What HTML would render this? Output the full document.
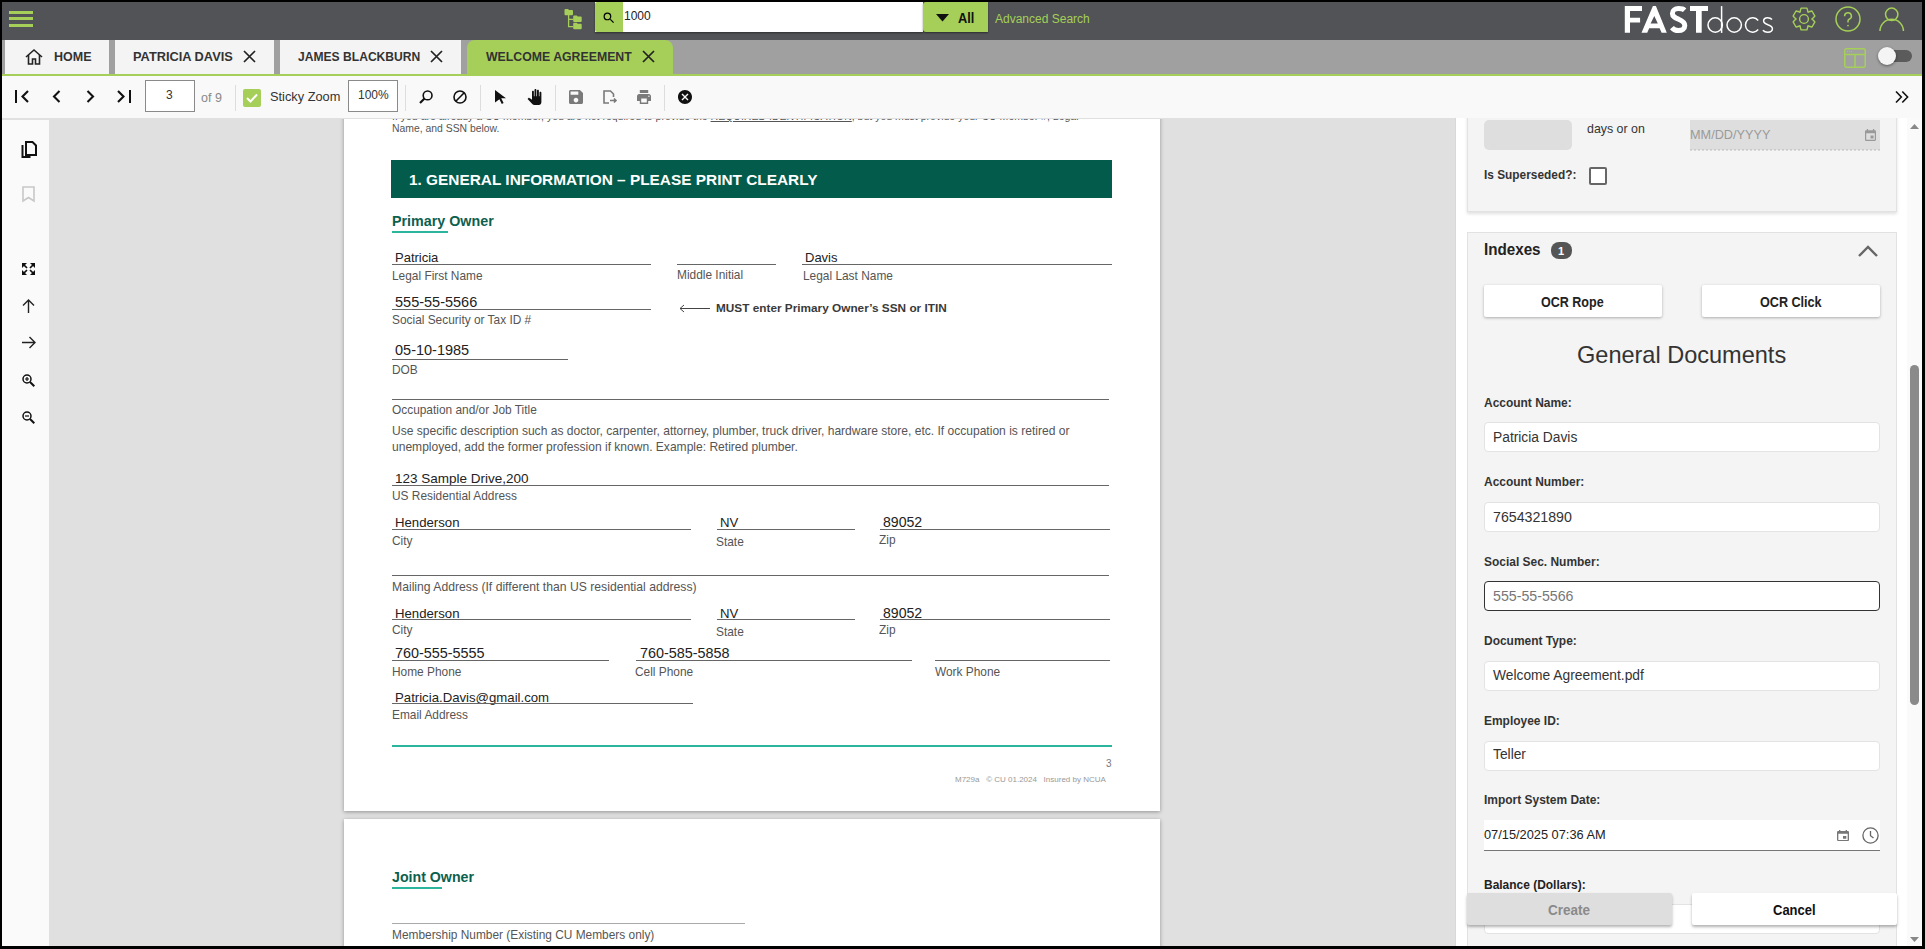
<!DOCTYPE html>
<html><head><meta charset="utf-8"><title>FASTdocs</title><style>
*{box-sizing:border-box}
html,body{margin:0;padding:0}
body{width:1925px;height:949px;overflow:hidden;background:#000;position:relative;font-family:"Liberation Sans",sans-serif}
.b{position:absolute}
.t{position:absolute;white-space:nowrap}
svg{position:absolute;overflow:visible}
</style></head>
<body>
<div class="b" style="left:2px;top:2px;width:1920px;height:38px;background:#525356"></div>
<div class="b" style="left:9px;top:11px;width:24px;height:3px;background:#a5cf58"></div>
<div class="b" style="left:9px;top:17px;width:24px;height:3px;background:#a5cf58"></div>
<div class="b" style="left:9px;top:24px;width:24px;height:3px;background:#a5cf58"></div>
<svg style="left:564px;top:9px" width="18" height="21" viewBox="0 0 18 21">
<g fill="#a5cf58">
<path d="M0.5 1a1 1 0 0 1 1-1h2.5l1 1h3a1 1 0 0 1 1 1v3.3a1 1 0 0 1-1 1H1.5a1 1 0 0 1-1-1z"/>
<path d="M9.2 7.5a1 1 0 0 1 1-1h2.5l1 1h3a1 1 0 0 1 1 1v3.5a1 1 0 0 1-1 1h-6.5a1 1 0 0 1-1-1z"/>
<path d="M9.2 14.7a1 1 0 0 1 1-1h2.5l1 1h3a1 1 0 0 1 1 1v3.5a1 1 0 0 1-1 1h-6.5a1 1 0 0 1-1-1z"/>
</g>
<path d="M4.6 6V17.6H9.5M4.6 10.3H9.5" stroke="#a5cf58" stroke-width="1.3" fill="none"/>
</svg>
<div class="b" style="left:595px;top:2px;width:328px;height:30px;background:#fff;box-shadow:0 1px 2px rgba(0,0,0,.45)"></div>
<div class="b" style="left:595px;top:2px;width:28px;height:30px;background:#a5cf58;border-radius:2px 0 0 2px"></div>
<svg style="left:603px;top:12px" width="12" height="12" viewBox="0 0 24 24"><path d="M15.5 14h-.79l-.28-.27A6.47 6.47 0 0 0 16 9.5 6.5 6.5 0 1 0 9.5 16c1.61 0 3.09-.59 4.23-1.57l.27.28v.79l5 4.99L20.49 19l-4.99-5zm-6 0C7.01 14 5 11.99 5 9.5S7.01 5 9.5 5 14 7.01 14 9.5 11.99 14 9.5 14z" transform="translate(-2.5 -2.5) scale(1.2)"/></svg>
<div class="t" style="left:624px;top:10px;font-size:12px;line-height:12px;font-weight:normal;color:#222;">1000</div>
<div class="b" style="left:923px;top:2px;width:65px;height:30px;background:#a5cf58;border-radius:3px 0 0 3px;box-shadow:0 1px 2px rgba(0,0,0,.45)"></div>
<svg style="left:936px;top:14px" width="13" height="8" viewBox="0 0 13 8"><path d="M0 0h13L6.5 7.5z" fill="#111"/></svg>
<div class="t" style="left:958px;top:11px;font-size:14.2px;line-height:14.2px;font-weight:bold;color:#111;transform:scaleX(.9);transform-origin:0 0">All</div>
<div class="t" style="left:995px;top:13px;font-size:12px;line-height:12px;font-weight:normal;color:#a5cf58;">Advanced Search</div>
<svg style="left:1600px;top:0px" width="180" height="40" viewBox="1600 0 180 40">
<g fill="#fff">
<path d="M1624.8 6.1H1642V11.1H1630V17.8H1640.1V22.6H1630V32.8H1624.8Z"/>
<path fill-rule="evenodd" d="M1641.5 32.8L1652.9 6.1H1655.9L1666.8 32.8H1661.6L1659.6 28.3H1649.2L1647.2 32.8ZM1650.6 23.5H1657.8L1654.3 15.9Z"/>
<path d="M1690 6.1H1708V11.1H1701.7V32.8H1696V11.1H1690Z"/>
</g>
<g fill="none" stroke="#fff">
<path stroke-width="5" d="M1684.6 10.2C1683 8.7 1681 8.6 1678.4 8.6C1675 8.6 1672.4 10.5 1672.4 13.4C1672.4 16.6 1675.3 17.8 1678.6 19.2C1682 20.6 1684.8 22 1684.8 25.6C1684.8 28.6 1682.2 30.6 1678.4 30.6C1675.6 30.6 1673.4 29.4 1671.9 27.6"/>
<g stroke-width="1.5">
<circle cx="1715.2" cy="25" r="7.2"/><path d="M1721.6 6.1V32.9"/>
<circle cx="1734.2" cy="25" r="7.2"/>
<path d="M1758.2 20.4A7.2 7.2 0 1 0 1758.2 29.6"/>
<path d="M1772 19.6C1771 18.4 1769.4 17.8 1767.6 17.8C1765.3 17.8 1763.6 19.2 1763.6 21.1C1763.6 23.3 1765.6 24 1767.9 24.8C1770.4 25.6 1772.4 26.6 1772.4 28.8C1772.4 30.8 1770.4 32.2 1767.7 32.2C1765.6 32.2 1763.9 31.4 1762.9 30.2"/>
</g></g></svg>
<svg style="left:1792px;top:7px" width="24" height="24" viewBox="0 0 24 24" fill="none" stroke="#a5cf58" stroke-width="1.4" stroke-linejoin="round">
<path d="M8.24 3.93L9.08 1.09L14.92 1.09L15.76 3.93Q15.45 6.02 17.10 4.71L17.10 4.71L19.99 4.01L22.91 9.08L20.87 11.22Q18.90 12.00 20.87 12.78L20.87 12.78L22.91 14.92L19.99 19.99L17.10 19.29Q15.45 17.98 15.76 20.07L15.76 20.07L14.92 22.91L9.08 22.91L8.24 20.07Q8.55 17.98 6.90 19.29L6.90 19.29L4.01 19.99L1.09 14.92L3.13 12.78Q5.10 12.00 3.13 11.22L3.13 11.22L1.09 9.08L4.01 4.01L6.90 4.71Q8.55 6.02 8.24 3.93Z"/>
<circle cx="12" cy="12" r="4.4"/></svg>
<svg style="left:1835px;top:6px" width="26" height="26" viewBox="0 0 26 26" fill="none" stroke="#a5cf58" stroke-width="1.5">
<circle cx="13" cy="13" r="12"/>
<path d="M9.6 10.2a3.4 3.4 0 1 1 4.6 3.1c-.9.4-1.2 1-1.2 2v1.3" />
<circle cx="13" cy="19.6" r="0.9" fill="#a5cf58" stroke="none"/></svg>
<svg style="left:1879px;top:7px" width="26" height="25" viewBox="0 0 26 25" fill="none" stroke="#a5cf58" stroke-width="1.5">
<circle cx="12.7" cy="7.3" r="6.2"/>
<path d="M1 24A11.7 11.7 0 0 1 24.4 24"/></svg>
<div class="b" style="left:2px;top:40px;width:1920px;height:34px;background:#a0a0a0"></div>
<div class="b" style="left:5px;top:40px;width:104px;height:34px;background:#f4f4f4"></div>
<div class="b" style="left:115px;top:40px;width:159px;height:34px;background:#f4f4f4"></div>
<div class="b" style="left:280px;top:40px;width:181px;height:34px;background:#f4f4f4"></div>
<div class="b" style="left:467px;top:40px;width:206px;height:34px;background:#a5cf58;border-radius:8px 8px 0 0"></div>
<svg style="left:25px;top:49px" width="18" height="16" viewBox="0 0 18 16" fill="none" stroke="#222" stroke-width="1.6">
<path d="M1 8L9 1l8 7"/><path d="M3.5 6v9h4v-5h3v5h4V6"/></svg>
<div class="t" style="left:54px;top:51px;font-size:12.5px;line-height:12.5px;font-weight:bold;color:#333;">HOME</div>
<div class="t" style="left:133px;top:51px;font-size:12.8px;line-height:12.8px;font-weight:bold;color:#333;">PATRICIA DAVIS</div>
<svg style="left:243px;top:50px" width="13" height="13" viewBox="0 0 13 13"><path d="M1 1L12 12M12 1L1 12" stroke="#222" stroke-width="1.7"/></svg>
<div class="t" style="left:298px;top:51px;font-size:12.1px;line-height:12.1px;font-weight:bold;color:#333;">JAMES BLACKBURN</div>
<svg style="left:430px;top:50px" width="13" height="13" viewBox="0 0 13 13"><path d="M1 1L12 12M12 1L1 12" stroke="#222" stroke-width="1.7"/></svg>
<div class="t" style="left:486px;top:51px;font-size:12.3px;line-height:12.3px;font-weight:bold;color:#333;">WELCOME AGREEMENT</div>
<svg style="left:642px;top:50px" width="13" height="13" viewBox="0 0 13 13"><path d="M1 1L12 12M12 1L1 12" stroke="#222" stroke-width="1.7"/></svg>
<svg style="left:1844px;top:48px" width="22" height="20" viewBox="0 0 22 20" fill="none" stroke="#a5cf58" stroke-width="1.5">
<rect x="0.75" y="0.75" width="20.5" height="18.5" rx="2"/><path d="M1 6.5h20M11 6.5V19"/>
<circle cx="3.5" cy="3.6" r=".5" fill="#a5cf58" stroke="none"/><circle cx="5.5" cy="3.6" r=".5" fill="#a5cf58" stroke="none"/><circle cx="7.5" cy="3.6" r=".5" fill="#a5cf58" stroke="none"/>
</svg>
<div class="b" style="left:1880px;top:50px;width:32px;height:12px;background:#5b5b5b;border-radius:6px"></div>
<div class="b" style="left:1878px;top:47px;width:18px;height:18px;background:#f4f4f4;border-radius:50%;box-shadow:0 1px 3px rgba(0,0,0,.45)"></div>
<div class="b" style="left:2px;top:74px;width:1920px;height:2px;background:#a5cf58"></div>
<div class="b" style="left:2px;top:76px;width:1920px;height:42px;background:#f9f9f9"></div>
<svg style="left:15px;top:90px" width="14" height="13" viewBox="0 0 14 13" fill="none" stroke="#111" stroke-width="2"><path d="M1 0v13"/><path d="M13 1L7.5 6.5 13 12" stroke-width="2.1"/></svg>
<svg style="left:52px;top:90px" width="9" height="13" viewBox="0 0 9 13" fill="none" stroke="#111" stroke-width="2.1"><path d="M7.5 1L2 6.5 7.5 12"/></svg>
<svg style="left:86px;top:90px" width="9" height="13" viewBox="0 0 9 13" fill="none" stroke="#111" stroke-width="2.1"><path d="M1.5 1L7 6.5 1.5 12"/></svg>
<svg style="left:117px;top:90px" width="14" height="13" viewBox="0 0 14 13" fill="none" stroke="#111" stroke-width="2"><path d="M13 0v13"/><path d="M1 1L6.5 6.5 1 12" stroke-width="2.1"/></svg>
<div class="b" style="left:145px;top:80px;width:50px;height:32px;background:#fff;border:1px solid #8a8a8a"></div>
<div class="t" style="left:166px;top:89px;font-size:12px;line-height:12px;font-weight:normal;color:#333;">3</div>
<div class="t" style="left:201px;top:92px;font-size:12.5px;line-height:12.5px;font-weight:normal;color:#888;">of 9</div>
<div class="b" style="left:235px;top:85px;width:1px;height:26px;background:#ddd"></div>
<div class="b" style="left:243px;top:89px;width:18px;height:18px;background:#a5cf58;border-radius:2px"></div>
<svg style="left:246px;top:93px" width="12" height="10" viewBox="0 0 12 10" fill="none" stroke="#fff" stroke-width="2"><path d="M1 5l3.5 3.5L11 1.5"/></svg>
<div class="t" style="left:270px;top:91px;font-size:12.8px;line-height:12.8px;font-weight:normal;color:#333;">Sticky Zoom</div>
<div class="b" style="left:348px;top:80px;width:50px;height:32px;background:#fff;border:1px solid #8a8a8a"></div>
<div class="t" style="left:358px;top:89px;font-size:12px;line-height:12px;font-weight:normal;color:#333;">100%</div>
<div class="b" style="left:405px;top:85px;width:1px;height:26px;background:#ddd"></div>
<svg style="left:419px;top:90px" width="14" height="14" viewBox="0 0 14 14" fill="none" stroke="#111" stroke-width="1.6"><circle cx="8.6" cy="5.4" r="4.4"/><path d="M5.5 8.5L1 13" stroke-width="2.2"/></svg>
<svg style="left:453px;top:90px" width="14" height="14" viewBox="0 0 14 14" fill="none" stroke="#111" stroke-width="1.6"><circle cx="7" cy="7" r="6"/><path d="M2.8 11.2L11.2 2.8"/></svg>
<div class="b" style="left:480px;top:85px;width:1px;height:26px;background:#ddd"></div>
<svg style="left:495px;top:90px" width="11" height="14" viewBox="0 0 11 14"><path d="M0 0L11 8.2H6.2L8.6 13 6.8 14 4.4 9.2 0 12.6z" fill="#111"/></svg>
<svg style="left:527px;top:89px" width="15" height="16" viewBox="0 0 24 24" preserveAspectRatio="none"><path d="M23 5.5V20c0 2.2-1.8 4-4 4h-7.3c-1.08 0-2.1-.43-2.85-1.19L1 14.83s1.26-1.23 1.3-1.25c.22-.19.49-.29.79-.29.22 0 .42.06.6.16.04.01 4.31 2.46 4.31 2.46V4c0-.83.67-1.5 1.5-1.5S11 3.17 11 4v7h1V1.5c0-.83.67-1.5 1.5-1.5S15 .67 15 1.5V11h1V2.5c0-.83.67-1.5 1.5-1.5s1.5.67 1.5 1.5V11h1V5.5c0-.83.67-1.5 1.5-1.5s1.5.67 1.5 1.5z" fill="#111"/></svg>
<div class="b" style="left:555px;top:85px;width:1px;height:26px;background:#ddd"></div>
<svg style="left:569px;top:90px" width="14" height="14" viewBox="3 3 18 18" preserveAspectRatio="none"><path d="M17 3H5c-1.11 0-2 .9-2 2v14c0 1.1.89 2 2 2h14c1.1 0 2-.9 2-2V7l-4-4zm-5 16c-1.66 0-3-1.34-3-3s1.34-3 3-3 3 1.34 3 3-1.34 3-3 3zm3-10H5V5h10v4z" fill="#7a7a7a"/></svg>
<svg style="left:603px;top:90px" width="14" height="14" viewBox="0 0 14 14" fill="none" stroke="#7a7a7a" stroke-width="1.6"><path d="M6 13H1V1h6.5L10.5 4v3"/><path d="M7 10.5h6M11 8.5l2 2-2 2" /></svg>
<svg style="left:637px;top:90px" width="14" height="14" viewBox="2 3 20 18" preserveAspectRatio="none"><path d="M19 8H5c-1.66 0-3 1.34-3 3v6h4v4h12v-4h4v-6c0-1.66-1.34-3-3-3zm-3 11H8v-5h8v5zm3-7c-.55 0-1-.45-1-1s.45-1 1-1 1 .45 1 1-.45 1-1 1zm-1-9H6v4h12V3z" fill="#7a7a7a"/></svg>
<div class="b" style="left:664px;top:85px;width:1px;height:26px;background:#ddd"></div>
<svg style="left:678px;top:90px" width="14" height="14" viewBox="2 2 20 20" preserveAspectRatio="none"><path d="M12 2C6.47 2 2 6.47 2 12s4.47 10 10 10 10-4.47 10-10S17.53 2 12 2zm5 13.59L15.59 17 12 13.41 8.41 17 7 15.59 10.59 12 7 8.41 8.41 7 12 10.59 15.59 7 17 8.41 13.41 12 17 15.59z" fill="#111"/></svg>
<svg style="left:1895px;top:91px" width="14" height="12" viewBox="0 0 14 12" fill="none" stroke="#111" stroke-width="1.6"><path d="M1 0.5L6.3 6 1 11.5M7.3 0.5L12.6 6 7.3 11.5"/></svg>
<div class="b" style="left:2px;top:118px;width:1453px;height:828px;background:#e0e0e0"></div>
<div class="b" style="left:2px;top:120px;width:47px;height:826px;background:#fafafa"></div>
<svg style="left:21px;top:141px" width="16" height="17" viewBox="0 0 16 17" fill="none" stroke="#111" stroke-width="2"><path d="M1.5 4v12h8"/><path d="M5 1h6.5L15 4.5V14H5z"/></svg>
<svg style="left:22px;top:186px" width="13" height="16" viewBox="0 0 13 16" fill="none" stroke="#c8c8c8" stroke-width="1.6"><path d="M1 1h11v14l-5.5-3.5L1 15z"/></svg>
<svg style="left:22px;top:263px" width="13" height="12" viewBox="0 0 13 12"><g fill="#111"><path d="M0 0h5L0 5z"/><path d="M13 0H8l5 5z"/><path d="M0 12h5L0 7z"/><path d="M13 12H8l5-5z"/></g><g stroke="#111" stroke-width="1.7"><path d="M1.5 1.5L5 5M11.5 1.5L8 5M1.5 10.5L5 7M11.5 10.5L8 7"/></g></svg>
<svg style="left:22px;top:299px" width="13" height="14" viewBox="0 0 13 14" fill="none" stroke="#222" stroke-width="1.4"><path d="M6.5 14V1M1 6.5L6.5 1 12 6.5"/></svg>
<svg style="left:22px;top:336px" width="14" height="13" viewBox="0 0 14 13" fill="none" stroke="#222" stroke-width="1.4"><path d="M0 6.5h13M7.5 1L13 6.5 7.5 12"/></svg>
<svg style="left:22px;top:374px" width="13" height="13" viewBox="0 0 13 13" fill="none" stroke="#111" stroke-width="1.5"><circle cx="5" cy="5" r="4"/><path d="M8 8l4.3 4.3" stroke-width="2"/><path d="M5 3v4M3 5h4" stroke-width="1.2"/></svg>
<svg style="left:22px;top:411px" width="13" height="13" viewBox="0 0 13 13" fill="none" stroke="#111" stroke-width="1.5"><circle cx="5" cy="5" r="4"/><path d="M8 8l4.3 4.3" stroke-width="2"/><path d="M3 5h4" stroke-width="1.2"/></svg>
<div class="b" style="left:0;top:0;width:1925px;height:949px;clip-path:inset(119px 470px 3px 49px)">
<div class="b" style="left:344px;top:-245px;width:816px;height:1056px;background:#fff;box-shadow:0 1px 4px rgba(0,0,0,.35)"></div>
<div class="b" style="left:344px;top:819px;width:816px;height:1056px;background:#fff;box-shadow:0 1px 4px rgba(0,0,0,.35)"></div>
<div class="t" style="left:392px;top:111px;font-size:10.52px;line-height:10.52px;font-weight:normal;color:#555;">If you are already a CU member, you are not required to provide the <u>REQUIRED IDENTIFICATION</u>, but you must provide your CU Member #, Legal</div>
<div class="t" style="left:392px;top:124px;font-size:10.4px;line-height:10.4px;font-weight:normal;color:#555;">Name, and SSN below.</div>
<div class="b" style="left:391px;top:160px;width:721px;height:38px;background:#035c4b"></div>
<div class="t" style="left:409px;top:172px;font-size:15.4px;line-height:15.4px;font-weight:bold;color:#fff;">1. GENERAL INFORMATION – PLEASE PRINT CLEARLY</div>
<div class="t" style="left:392px;top:214px;font-size:14.3px;line-height:14.3px;font-weight:bold;color:#0d5f4e;">Primary Owner</div>
<div class="b" style="left:392px;top:231px;width:56px;height:2px;background:#2bb59c"></div>
<div class="t" style="left:395px;top:251px;font-size:13px;line-height:13px;font-weight:normal;color:#222;">Patricia</div>
<div class="b" style="left:392px;top:264px;width:259px;height:1px;background:#666"></div>
<div class="t" style="left:392px;top:271px;font-size:11.9px;line-height:11.9px;font-weight:normal;color:#555;">Legal First Name</div>
<div class="b" style="left:677px;top:264px;width:99px;height:1px;background:#666"></div>
<div class="t" style="left:677px;top:270px;font-size:11.9px;line-height:11.9px;font-weight:normal;color:#555;">Middle Initial</div>
<div class="t" style="left:805px;top:251px;font-size:13px;line-height:13px;font-weight:normal;color:#222;">Davis</div>
<div class="b" style="left:802px;top:264px;width:310px;height:1px;background:#666"></div>
<div class="t" style="left:803px;top:271px;font-size:11.9px;line-height:11.9px;font-weight:normal;color:#555;">Legal Last Name</div>
<div class="t" style="left:395px;top:295px;font-size:14.5px;line-height:14.5px;font-weight:normal;color:#222;">555-55-5566</div>
<div class="b" style="left:392px;top:309px;width:259px;height:1px;background:#666"></div>
<div class="t" style="left:392px;top:315px;font-size:11.9px;line-height:11.9px;font-weight:normal;color:#555;">Social Security or Tax ID #</div>
<svg style="left:679px;top:304px" width="31" height="9" viewBox="0 0 31 9" fill="none" stroke="#444" stroke-width="1"><path d="M1 4.5h30M5 1L1 4.5 5 8"/></svg>
<div class="t" style="left:716px;top:303px;font-size:11.8px;line-height:11.8px;font-weight:bold;color:#3a3a3a;">MUST enter Primary Owner’s SSN or ITIN</div>
<div class="t" style="left:395px;top:343px;font-size:14.5px;line-height:14.5px;font-weight:normal;color:#222;">05-10-1985</div>
<div class="b" style="left:392px;top:359px;width:176px;height:1px;background:#666"></div>
<div class="t" style="left:392px;top:365px;font-size:11.9px;line-height:11.9px;font-weight:normal;color:#555;">DOB</div>
<div class="b" style="left:392px;top:399px;width:717px;height:1px;background:#666"></div>
<div class="t" style="left:392px;top:405px;font-size:11.9px;line-height:11.9px;font-weight:normal;color:#555;">Occupation and/or Job Title</div>
<div class="t" style="left:392px;top:425px;font-size:12.05px;line-height:12.05px;font-weight:normal;color:#555;">Use specific description such as doctor, carpenter, attorney, plumber, truck driver, hardware store, etc. If occupation is retired or</div>
<div class="t" style="left:392px;top:441px;font-size:12.05px;line-height:12.05px;font-weight:normal;color:#555;">unemployed, add the former profession if known. Example: Retired plumber.</div>
<div class="t" style="left:395px;top:472px;font-size:13.5px;line-height:13.5px;font-weight:normal;color:#222;">123 Sample Drive,200</div>
<div class="b" style="left:392px;top:485px;width:717px;height:1px;background:#666"></div>
<div class="t" style="left:392px;top:491px;font-size:11.9px;line-height:11.9px;font-weight:normal;color:#555;">US Residential Address</div>
<div class="t" style="left:395px;top:516px;font-size:13.2px;line-height:13.2px;font-weight:normal;color:#222;">Henderson</div>
<div class="b" style="left:392px;top:529px;width:299px;height:1px;background:#666"></div>
<div class="t" style="left:392px;top:536px;font-size:11.9px;line-height:11.9px;font-weight:normal;color:#555;">City</div>
<div class="t" style="left:720px;top:516px;font-size:13.2px;line-height:13.2px;font-weight:normal;color:#222;">NV</div>
<div class="b" style="left:717px;top:529px;width:138px;height:1px;background:#666"></div>
<div class="t" style="left:716px;top:537px;font-size:11.9px;line-height:11.9px;font-weight:normal;color:#555;">State</div>
<div class="t" style="left:883px;top:515px;font-size:14.1px;line-height:14.1px;font-weight:normal;color:#222;">89052</div>
<div class="b" style="left:880px;top:529px;width:230px;height:1px;background:#666"></div>
<div class="t" style="left:879px;top:535px;font-size:11.9px;line-height:11.9px;font-weight:normal;color:#555;">Zip</div>
<div class="b" style="left:392px;top:575px;width:717px;height:1px;background:#666"></div>
<div class="t" style="left:392px;top:581px;font-size:12.2px;line-height:12.2px;font-weight:normal;color:#555;">Mailing Address (If different than US residential address)</div>
<div class="t" style="left:395px;top:607px;font-size:13.2px;line-height:13.2px;font-weight:normal;color:#222;">Henderson</div>
<div class="b" style="left:392px;top:619px;width:299px;height:1px;background:#666"></div>
<div class="t" style="left:392px;top:625px;font-size:11.9px;line-height:11.9px;font-weight:normal;color:#555;">City</div>
<div class="t" style="left:720px;top:607px;font-size:13.2px;line-height:13.2px;font-weight:normal;color:#222;">NV</div>
<div class="b" style="left:717px;top:619px;width:138px;height:1px;background:#666"></div>
<div class="t" style="left:716px;top:627px;font-size:11.9px;line-height:11.9px;font-weight:normal;color:#555;">State</div>
<div class="t" style="left:883px;top:606px;font-size:14.1px;line-height:14.1px;font-weight:normal;color:#222;">89052</div>
<div class="b" style="left:880px;top:619px;width:230px;height:1px;background:#666"></div>
<div class="t" style="left:879px;top:625px;font-size:11.9px;line-height:11.9px;font-weight:normal;color:#555;">Zip</div>
<div class="t" style="left:395px;top:646px;font-size:14.4px;line-height:14.4px;font-weight:normal;color:#222;">760-555-5555</div>
<div class="b" style="left:392px;top:660px;width:217px;height:1px;background:#666"></div>
<div class="t" style="left:392px;top:667px;font-size:11.9px;line-height:11.9px;font-weight:normal;color:#555;">Home Phone</div>
<div class="t" style="left:640px;top:646px;font-size:14.4px;line-height:14.4px;font-weight:normal;color:#222;">760-585-5858</div>
<div class="b" style="left:636px;top:660px;width:276px;height:1px;background:#666"></div>
<div class="t" style="left:635px;top:667px;font-size:11.9px;line-height:11.9px;font-weight:normal;color:#555;">Cell Phone</div>
<div class="b" style="left:935px;top:660px;width:175px;height:1px;background:#666"></div>
<div class="t" style="left:935px;top:667px;font-size:11.9px;line-height:11.9px;font-weight:normal;color:#555;">Work Phone</div>
<div class="t" style="left:395px;top:691px;font-size:13.2px;line-height:13.2px;font-weight:normal;color:#222;">Patricia.Davis@gmail.com</div>
<div class="b" style="left:392px;top:703px;width:301px;height:1px;background:#666"></div>
<div class="t" style="left:392px;top:710px;font-size:11.9px;line-height:11.9px;font-weight:normal;color:#555;">Email Address</div>
<div class="b" style="left:392px;top:745px;width:720px;height:2px;background:#2bb59c"></div>
<div class="t" style="left:1106px;top:759px;font-size:10px;line-height:10px;font-weight:normal;color:#777;">3</div>
<div class="t" style="left:955px;top:776px;font-size:8px;line-height:8px;font-weight:normal;color:#999;">M729a&nbsp;&nbsp; © CU 01.2024&nbsp;&nbsp; Insured by NCUA</div>
<div class="t" style="left:392px;top:870px;font-size:14.2px;line-height:14.2px;font-weight:bold;color:#0d5f4e;">Joint Owner</div>
<div class="b" style="left:392px;top:887px;width:50px;height:2px;background:#2bb59c"></div>
<div class="b" style="left:392px;top:923px;width:353px;height:1px;background:#aaa"></div>
<div class="t" style="left:392px;top:930px;font-size:11.9px;line-height:11.9px;font-weight:normal;color:#555;">Membership Number (Existing CU Members only)</div>
</div>
<div class="b" style="left:1455px;top:118px;width:467px;height:828px;background:#fff;border-left:1px solid #d8d8d8"></div>
<div class="b" style="left:0;top:0;width:1925px;height:949px;clip-path:inset(118px 3px 3px 1455px)">
<div class="b" style="left:1907px;top:118px;width:15px;height:828px;background:#fafafa"></div>
<svg style="left:1910px;top:124px" width="9" height="5" viewBox="0 0 9 5"><path d="M0 5L4.5 0 9 5z" fill="#888"/></svg>
<div class="b" style="left:1910px;top:365px;width:9px;height:340px;background:#8a8a8a;border-radius:5px"></div>
<svg style="left:1910px;top:937px" width="9" height="5" viewBox="0 0 9 5"><path d="M0 0h9L4.5 5z" fill="#888"/></svg>
<div class="b" style="left:1467px;top:100px;width:430px;height:112px;background:#f4f4f4;border:1px solid #e2e2e2;box-shadow:0 2px 3px rgba(0,0,0,.12)"></div>
<div class="b" style="left:1484px;top:120px;width:88px;height:30px;background:#dedede;border-radius:5px"></div>
<div class="t" style="left:1587px;top:123px;font-size:12.4px;line-height:12.4px;font-weight:normal;color:#333;">days or on</div>
<div class="b" style="left:1690px;top:120px;width:190px;height:30px;background:#dedede"></div>
<svg style="left:1690px;top:149px" width="190" height="2" viewBox="0 0 190 2"><path d="M0.5 1H190" stroke="#888" stroke-width="1" stroke-dasharray="1 3"/></svg>
<div class="t" style="left:1690px;top:129px;font-size:12.7px;line-height:12.7px;font-weight:normal;color:#9a9a9a;">MM/DD/YYYY</div>
<svg style="left:1865px;top:129px" width="11" height="12" viewBox="3 2 18 20" preserveAspectRatio="none"><path d="M19 4h-1V2h-2v2H8V2H6v2H5c-1.11 0-1.99.9-1.99 2L3 20a2 2 0 0 0 2 2h14c1.1 0 2-.9 2-2V6c0-1.1-.9-2-2-2zm0 16H5V9h14v11zM12 13h5v5h-5z" fill="#999"/></svg>
<div class="t" style="left:1484px;top:168px;font-size:13px;line-height:13px;font-weight:bold;color:#333;transform:scaleX(.913);transform-origin:0 0">Is Superseded?:</div>
<div class="b" style="left:1589px;top:167px;width:18px;height:18px;background:#fff;border:2px solid #666;border-radius:2px"></div>
<div class="b" style="left:1467px;top:232px;width:430px;height:728px;background:#f4f4f4;border:1px solid #e2e2e2"></div>
<div class="t" style="left:1484px;top:242px;font-size:16.8px;line-height:16.8px;font-weight:bold;color:#222;transform:scaleX(.905);transform-origin:0 0">Indexes</div>
<div class="b" style="left:1551px;top:242px;width:21px;height:17px;background:#555;border-radius:8px"></div>
<div class="t" style="left:1558px;top:246px;font-size:11px;line-height:11px;font-weight:bold;color:#fff;">1</div>
<svg style="left:1858px;top:245px" width="20" height="12" viewBox="0 0 20 12" fill="none" stroke="#666" stroke-width="2.4"><path d="M1 11L10 2l9 9"/></svg>
<div class="b" style="left:1484px;top:285px;width:178px;height:32px;background:#fff;border-radius:2px;box-shadow:0 1px 3px rgba(0,0,0,.3)"></div>
<div class="t" style="left:1541px;top:295px;font-size:14px;line-height:14px;font-weight:bold;color:#222;transform:scaleX(.895);transform-origin:0 0">OCR Rope</div>
<div class="b" style="left:1702px;top:285px;width:178px;height:32px;background:#fff;border-radius:2px;box-shadow:0 1px 3px rgba(0,0,0,.3)"></div>
<div class="t" style="left:1760px;top:295px;font-size:14px;line-height:14px;font-weight:bold;color:#222;transform:scaleX(.9);transform-origin:0 0">OCR Click</div>
<div class="t" style="left:1577px;top:343px;font-size:24px;line-height:24px;font-weight:normal;color:#333;transform:scaleX(.98);transform-origin:0 0">General Documents</div>
<div class="t" style="left:1484px;top:396px;font-size:13px;line-height:13px;font-weight:bold;color:#333;transform:scaleX(.92);transform-origin:0 0">Account Name:</div>
<div class="b" style="left:1484px;top:422px;width:396px;height:30px;background:#fff;border:1px solid #e3e3e3;border-radius:4px"></div>
<div class="t" style="left:1493px;top:431px;font-size:13.8px;line-height:13.8px;font-weight:normal;color:#333;">Patricia Davis</div>
<div class="t" style="left:1484px;top:475px;font-size:13px;line-height:13px;font-weight:bold;color:#333;transform:scaleX(.92);transform-origin:0 0">Account Number:</div>
<div class="b" style="left:1484px;top:502px;width:396px;height:30px;background:#fff;border:1px solid #e3e3e3;border-radius:4px"></div>
<div class="t" style="left:1493px;top:510px;font-size:14.2px;line-height:14.2px;font-weight:normal;color:#333;">7654321890</div>
<div class="t" style="left:1484px;top:555px;font-size:13px;line-height:13px;font-weight:bold;color:#333;transform:scaleX(.92);transform-origin:0 0">Social Sec. Number:</div>
<div class="b" style="left:1484px;top:581px;width:396px;height:30px;background:#fff;border:1.5px solid #333;border-radius:4px"></div>
<div class="t" style="left:1493px;top:589px;font-size:14.2px;line-height:14.2px;font-weight:normal;color:#777;">555-55-5566</div>
<div class="t" style="left:1484px;top:634px;font-size:13px;line-height:13px;font-weight:bold;color:#333;transform:scaleX(.92);transform-origin:0 0">Document Type:</div>
<div class="b" style="left:1484px;top:661px;width:396px;height:30px;background:#fff;border:1px solid #e3e3e3;border-radius:4px"></div>
<div class="t" style="left:1493px;top:669px;font-size:13.8px;line-height:13.8px;font-weight:normal;color:#333;">Welcome Agreement.pdf</div>
<div class="t" style="left:1484px;top:714px;font-size:13px;line-height:13px;font-weight:bold;color:#333;transform:scaleX(.92);transform-origin:0 0">Employee ID:</div>
<div class="b" style="left:1484px;top:741px;width:396px;height:30px;background:#fff;border:1px solid #e3e3e3;border-radius:4px"></div>
<div class="t" style="left:1493px;top:748px;font-size:13.8px;line-height:13.8px;font-weight:normal;color:#333;">Teller</div>
<div class="t" style="left:1484px;top:793px;font-size:13px;line-height:13px;font-weight:bold;color:#333;transform:scaleX(.92);transform-origin:0 0">Import System Date:</div>
<div class="b" style="left:1484px;top:820px;width:396px;height:31px;background:#fff;border-bottom:1px solid #777"></div>
<div class="t" style="left:1484px;top:829px;font-size:12.8px;line-height:12.8px;font-weight:normal;color:#222;">07/15/2025 07:36 AM</div>
<svg style="left:1837px;top:830px" width="12" height="11" viewBox="3 2 18 20" preserveAspectRatio="none"><path d="M19 4h-1V2h-2v2H8V2H6v2H5c-1.11 0-1.99.9-1.99 2L3 20a2 2 0 0 0 2 2h14c1.1 0 2-.9 2-2V6c0-1.1-.9-2-2-2zm0 16H5V9h14v11zM12 13h5v5h-5z" fill="#777"/></svg>
<svg style="left:1862px;top:827px" width="17" height="17" viewBox="0 0 17 17" fill="none" stroke="#666" stroke-width="1.3"><circle cx="8.5" cy="8.5" r="7.6"/><path d="M8.5 4v4.7l3 2.3"/></svg>
<div class="t" style="left:1484px;top:878px;font-size:13px;line-height:13px;font-weight:bold;color:#222;transform:scaleX(.92);transform-origin:0 0">Balance (Dollars):</div>
<div class="b" style="left:1484px;top:904px;width:396px;height:30px;background:#fff;border:1px solid #e3e3e3;border-radius:4px"></div>
<div class="b" style="left:1467px;top:893px;width:205px;height:32px;background:#dedede;border-radius:2px;box-shadow:0 2px 3px rgba(0,0,0,.3)"></div>
<div class="t" style="left:1548px;top:903px;font-size:14.6px;line-height:14.6px;font-weight:bold;color:#8a8a8a;transform:scaleX(.925);transform-origin:0 0">Create</div>
<div class="b" style="left:1692px;top:893px;width:205px;height:32px;background:#fff;border-radius:2px;box-shadow:0 2px 3px rgba(0,0,0,.3)"></div>
<div class="t" style="left:1773px;top:903px;font-size:14.6px;line-height:14.6px;font-weight:bold;color:#111;transform:scaleX(.89);transform-origin:0 0">Cancel</div>
</div>
<div class="b" style="left:0px;top:0px;width:1925px;height:2px;background:#000"></div>
<div class="b" style="left:0px;top:946px;width:1925px;height:3px;background:#000"></div>
<div class="b" style="left:0px;top:0px;width:2px;height:949px;background:#000"></div>
<div class="b" style="left:1922px;top:0px;width:3px;height:949px;background:#000"></div>
</body></html>
